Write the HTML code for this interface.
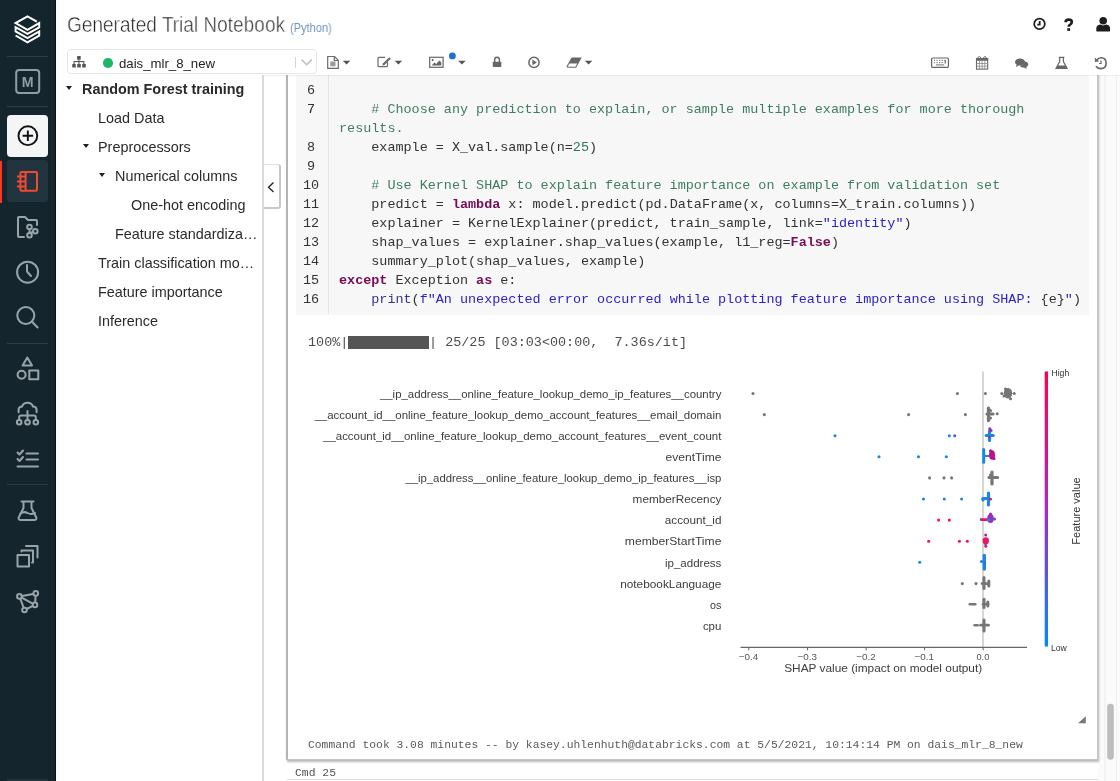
<!DOCTYPE html>
<html><head><meta charset="utf-8">
<style>
*{margin:0;padding:0;box-sizing:border-box}
html,body{width:1120px;height:781px;overflow:hidden;background:#fff;font-family:"Liberation Sans",sans-serif;position:relative}
.abs{position:absolute}
body>div,body>svg{will-change:transform}
#nav{left:0;top:0;width:56px;height:781px;background:#15252d;border-right:1px solid #0a1418}
.sep{position:absolute;left:7px;width:41px;height:1px;background:#2e3e46}
svg{position:absolute;overflow:visible}
#title{left:67px;top:12px;font-size:22.5px;line-height:26px;color:#1e1e1e;-webkit-text-stroke:0.55px #fff;white-space:nowrap;transform-origin:left top;transform:scaleX(0.846)}
#py{left:290px;top:21px;font-size:12px;color:#7094c2;white-space:nowrap;transform-origin:left top;transform:scaleX(0.92)}
#cluster{left:67px;top:49px;width:250px;height:25px;border:1px solid #e6e6e6;border-radius:4px;background:#fff}
.toc{position:absolute;margin-top:1px;white-space:nowrap;font-size:14.4px;color:#2a2a2a;line-height:17px}
.tri{position:absolute;width:0;height:0;margin-top:-1px;margin-left:-0.2px;border-left:3.1px solid transparent;border-right:3.1px solid transparent;border-top:4.6px solid #1e1e1e}
.code{position:absolute;margin-top:1px;left:339px;font-family:"Liberation Mono",monospace;font-size:13.45px;white-space:pre;line-height:19px;color:#333}
.ln{position:absolute;margin-top:1px;font-family:"Liberation Mono",monospace;font-size:13.45px;line-height:19px;color:#333;text-align:center;width:40px;left:291px}
.k{color:#760c56;font-weight:bold}.b{color:#36338f}
.c{color:#3f7d60}
.s{color:#2c22c8}
.n{color:#2f7656}
.lbl{position:absolute;right:400px;font-size:11.4px;color:#333;white-space:nowrap;line-height:13px}
</style></head><body>
<!-- notebook area -->
<div class="abs" style="left:263px;top:75px;width:1px;height:706px;background:#dcdcdc"></div>
<!-- cell -->
<div class="abs" style="left:286px;top:40px;width:812px;height:720px;border:1px solid #c4c4c4;border-left:2px solid #b4b4b4;box-shadow:1px 1.5px 2px rgba(0,0,0,.28);background:#fff"></div>
<div class="abs" style="left:296px;top:40px;width:793px;height:275px;background:#f7f7f7"></div>
<div class="abs" style="left:328px;top:40px;width:1px;height:274px;background:#e4e4e4"></div>

<div class="ln" style="top:80px">6</div>
<div class="ln" style="top:99px">7</div>
<div class="ln" style="top:137px">8</div>
<div class="ln" style="top:156px">9</div>
<div class="ln" style="top:175px">10</div>
<div class="ln" style="top:194px">11</div>
<div class="ln" style="top:213px">12</div>
<div class="ln" style="top:232px">13</div>
<div class="ln" style="top:251px">14</div>
<div class="ln" style="top:270px">15</div>
<div class="ln" style="top:289px">16</div>
<div class="code" style="top:99px"><span class="c">    # Choose any prediction to explain, or sample multiple examples for more thorough</span></div>
<div class="code" style="top:118px"><span class="c">results.</span></div>
<div class="code" style="top:137px">    example = X_val.sample(n=<span class="n">25</span>)</div>
<div class="code" style="top:175px"><span class="c">    # Use Kernel SHAP to explain feature importance on example from validation set</span></div>
<div class="code" style="top:194px">    predict = <span class="k">lambda</span> x: model.predict(pd.DataFrame(x, columns=X_train.columns))</div>
<div class="code" style="top:213px">    explainer = KernelExplainer(predict, train_sample, link=<span class="s">"identity"</span>)</div>
<div class="code" style="top:232px">    shap_values = explainer.shap_values(example, l1_reg=<span class="k">False</span>)</div>
<div class="code" style="top:251px">    summary_plot(shap_values, example)</div>
<div class="code" style="top:270px"><span class="k">except</span> Exception <span class="k">as</span> e:</div>
<div class="code" style="top:289px">    <span class="b">print</span>(<span class="s">f"An unexpected error occurred while plotting feature importance using SHAP: </span>{e}<span class="s">"</span>)</div>

<!-- output -->
<div class="code" style="left:308px;top:332px;color:#4d4d4d">100%|<span style="display:inline-block;width:80.7px;height:12.7px;background:#555;vertical-align:-3px"></span>| 25/25 [03:03&lt;00:00,  7.36s/it]</div>
<div class="code" style="left:308px;top:735px;font-size:11.35px;color:#5a5a5a">Command took 3.08 minutes -- by kasey.uhlenhuth@databricks.com at 5/5/2021, 10:14:14 PM on dais_mlr_8_new</div>
<div class="code" style="left:295px;top:763px;font-size:11.4px;color:#555">Cmd 25</div>
<div class="abs" style="left:287px;top:779px;width:811px;height:2px;border-top:1px solid #ddd"></div>

<!-- PLOT -->
<svg class="abs" style="left:0;top:0" width="1120" height="781">
<line x1="983" y1="371.5" x2="983" y2="647" stroke="#b4b4b4" stroke-width="1.1"/>
<text x="721.4" y="397.7" text-anchor="end" font-size="11.6" fill="#3c3c3c" font-family="Liberation Sans" textLength="341.5" lengthAdjust="spacingAndGlyphs">__ip_address__online_feature_lookup_demo_ip_features__country</text>
<text x="721.4" y="418.8" text-anchor="end" font-size="11.6" fill="#3c3c3c" font-family="Liberation Sans" textLength="407.0" lengthAdjust="spacingAndGlyphs">__account_id__online_feature_lookup_demo_account_features__email_domain</text>
<text x="721.4" y="439.9" text-anchor="end" font-size="11.6" fill="#3c3c3c" font-family="Liberation Sans" textLength="398.4" lengthAdjust="spacingAndGlyphs">__account_id__online_feature_lookup_demo_account_features__event_count</text>
<text x="721.4" y="461.0" text-anchor="end" font-size="11.6" fill="#3c3c3c" font-family="Liberation Sans" textLength="55.8" lengthAdjust="spacingAndGlyphs">eventTime</text>
<text x="721.4" y="482.1" text-anchor="end" font-size="11.6" fill="#3c3c3c" font-family="Liberation Sans" textLength="316.0" lengthAdjust="spacingAndGlyphs">__ip_address__online_feature_lookup_demo_ip_features__isp</text>
<text x="721.4" y="503.2" text-anchor="end" font-size="11.6" fill="#3c3c3c" font-family="Liberation Sans" textLength="88.8" lengthAdjust="spacingAndGlyphs">memberRecency</text>
<text x="721.4" y="524.3" text-anchor="end" font-size="11.6" fill="#3c3c3c" font-family="Liberation Sans" textLength="56.6" lengthAdjust="spacingAndGlyphs">account_id</text>
<text x="721.4" y="545.4" text-anchor="end" font-size="11.6" fill="#3c3c3c" font-family="Liberation Sans" textLength="96.6" lengthAdjust="spacingAndGlyphs">memberStartTime</text>
<text x="721.4" y="566.5" text-anchor="end" font-size="11.6" fill="#3c3c3c" font-family="Liberation Sans" textLength="56.5" lengthAdjust="spacingAndGlyphs">ip_address</text>
<text x="721.4" y="587.6" text-anchor="end" font-size="11.6" fill="#3c3c3c" font-family="Liberation Sans" textLength="101.2" lengthAdjust="spacingAndGlyphs">notebookLanguage</text>
<text x="721.4" y="608.7" text-anchor="end" font-size="11.6" fill="#3c3c3c" font-family="Liberation Sans" textLength="11.4" lengthAdjust="spacingAndGlyphs">os</text>
<text x="721.4" y="629.8" text-anchor="end" font-size="11.6" fill="#3c3c3c" font-family="Liberation Sans" textLength="18.5" lengthAdjust="spacingAndGlyphs">cpu</text>
<circle cx="753.0" cy="393.5" r="1.55" fill="#767676"/>
<circle cx="957.4" cy="393.5" r="1.55" fill="#767676"/>
<circle cx="985.4" cy="393.5" r="1.55" fill="#767676"/>
<ellipse cx="1008.0" cy="393.2" rx="4.2" ry="5.2" fill="#767676"/>
<circle cx="1001.8" cy="393.5" r="1.55" fill="#767676"/>
<circle cx="1014.2" cy="393.5" r="1.55" fill="#767676"/>
<circle cx="1010.5" cy="398.8" r="1.55" fill="#767676"/>
<circle cx="1005.5" cy="389.0" r="1.55" fill="#767676"/>
<circle cx="1004.0" cy="396.0" r="1.55" fill="#767676"/>
<circle cx="764.3" cy="414.6" r="1.55" fill="#767676"/>
<circle cx="908.6" cy="414.6" r="1.55" fill="#767676"/>
<circle cx="965.4" cy="414.6" r="1.55" fill="#767676"/>
<line x1="988.5" y1="408.2" x2="988.5" y2="420.5" stroke="#767676" stroke-width="3.3" stroke-linecap="round"/>
<line x1="987.0" y1="414.0" x2="993.0" y2="414.0" stroke="#767676" stroke-width="3.2" stroke-linecap="round"/>
<circle cx="990.5" cy="410.5" r="1.55" fill="#767676"/>
<circle cx="990.5" cy="418.0" r="1.55" fill="#767676"/>
<circle cx="997.2" cy="413.8" r="1.55" fill="#767676"/>
<circle cx="835.0" cy="435.7" r="1.55" fill="#1a86e8"/>
<circle cx="949.3" cy="435.7" r="1.55" fill="#1a86e8"/>
<circle cx="954.7" cy="435.7" r="1.55" fill="#5b55d6"/>
<line x1="989.5" y1="431.0" x2="989.5" y2="440.5" stroke="#1a86e8" stroke-width="3.2" stroke-linecap="round"/>
<line x1="986.2" y1="435.5" x2="993.2" y2="435.5" stroke="#1a86e8" stroke-width="3.2" stroke-linecap="round"/>
<circle cx="989.8" cy="428.7" r="1.55" fill="#9a2cb8"/>
<circle cx="991.0" cy="430.5" r="1.55" fill="#9a2cb8"/>
<circle cx="989.5" cy="437.0" r="1.0" fill="#c2108a"/>
<circle cx="879.0" cy="456.8" r="1.55" fill="#1a86e8"/>
<circle cx="918.5" cy="456.8" r="1.55" fill="#1a86e8"/>
<circle cx="946.3" cy="456.8" r="1.55" fill="#1a86e8"/>
<line x1="983.7" y1="449.5" x2="983.7" y2="462.2" stroke="#1a86e8" stroke-width="3.0" stroke-linecap="round"/>
<line x1="984.0" y1="456.0" x2="989.0" y2="456.0" stroke="#1a86e8" stroke-width="2.2" stroke-linecap="round"/>
<ellipse cx="992.0" cy="455.0" rx="3.0" ry="4.8" fill="#c2108a"/>
<circle cx="990.5" cy="450.8" r="1.55" fill="#c2108a"/>
<circle cx="994.0" cy="458.5" r="1.55" fill="#c2108a"/>
<circle cx="929.6" cy="477.9" r="1.55" fill="#767676"/>
<circle cx="944.0" cy="477.9" r="1.55" fill="#767676"/>
<circle cx="951.6" cy="477.9" r="1.55" fill="#767676"/>
<line x1="992.0" y1="472.0" x2="992.0" y2="484.0" stroke="#767676" stroke-width="3.2" stroke-linecap="round"/>
<line x1="989.0" y1="477.5" x2="997.5" y2="477.5" stroke="#767676" stroke-width="3.2" stroke-linecap="round"/>
<circle cx="990.5" cy="475.0" r="1.55" fill="#767676"/>
<circle cx="923.5" cy="499.0" r="1.55" fill="#1a86e8"/>
<circle cx="944.3" cy="499.0" r="1.55" fill="#1a86e8"/>
<circle cx="961.6" cy="499.0" r="1.55" fill="#1a86e8"/>
<line x1="988.5" y1="493.0" x2="988.5" y2="505.0" stroke="#1a86e8" stroke-width="3.2" stroke-linecap="round"/>
<line x1="982.8" y1="498.5" x2="988.5" y2="498.5" stroke="#1a86e8" stroke-width="3.2" stroke-linecap="round"/>
<circle cx="983.0" cy="500.0" r="1.55" fill="#1a86e8"/>
<circle cx="990.6" cy="499.2" r="1.4" fill="#ee1558"/>
<circle cx="938.6" cy="520.1" r="1.55" fill="#ee1558"/>
<circle cx="949.3" cy="520.1" r="1.55" fill="#ee1558"/>
<line x1="981.5" y1="519.6" x2="987.0" y2="519.6" stroke="#ee1558" stroke-width="2.8" stroke-linecap="round"/>
<circle cx="981.2" cy="519.6" r="1.3" fill="#9a2cb8"/>
<ellipse cx="990.5" cy="518.5" rx="3.3" ry="4.5" fill="#9a2cb8"/>
<circle cx="994.5" cy="519.0" r="1.55" fill="#5b55d6"/>
<circle cx="989.0" cy="520.0" r="1.6" fill="#1a86e8"/>
<circle cx="990.5" cy="514.0" r="1.55" fill="#9a2cb8"/>
<circle cx="928.7" cy="541.2" r="1.55" fill="#ee1558"/>
<circle cx="959.4" cy="541.2" r="1.55" fill="#ee1558"/>
<circle cx="967.3" cy="541.2" r="1.55" fill="#ee1558"/>
<ellipse cx="985.8" cy="540.8" rx="3.2" ry="3.6" fill="#ee1558"/>
<circle cx="985.7" cy="535.0" r="1.55" fill="#9a2cb8"/>
<circle cx="985.8" cy="546.2" r="1.55" fill="#ee1558"/>
<circle cx="985.5" cy="544.5" r="1.2" fill="#5b55d6"/>
<circle cx="919.7" cy="562.3" r="1.55" fill="#1a86e8"/>
<line x1="984.3" y1="555.5" x2="984.3" y2="569.0" stroke="#1a86e8" stroke-width="3.4" stroke-linecap="round"/>
<circle cx="981.5" cy="561.5" r="1.55" fill="#1a86e8"/>
<circle cx="984.5" cy="563.0" r="1.0" fill="#5b55d6"/>
<circle cx="962.3" cy="583.6" r="1.55" fill="#767676"/>
<circle cx="976.0" cy="583.6" r="1.55" fill="#767676"/>
<line x1="984.0" y1="577.5" x2="984.0" y2="588.5" stroke="#767676" stroke-width="3.0" stroke-linecap="round"/>
<line x1="988.8" y1="581.0" x2="988.8" y2="586.0" stroke="#767676" stroke-width="3.0" stroke-linecap="round"/>
<line x1="982.0" y1="583.6" x2="988.0" y2="583.6" stroke="#767676" stroke-width="2.6" stroke-linecap="round"/>
<line x1="969.8" y1="604.3" x2="975.2" y2="604.3" stroke="#767676" stroke-width="2.6" stroke-linecap="round"/>
<line x1="984.0" y1="599.2" x2="984.0" y2="607.6" stroke="#767676" stroke-width="3.0" stroke-linecap="round"/>
<line x1="987.8" y1="602.0" x2="987.8" y2="606.0" stroke="#767676" stroke-width="3.0" stroke-linecap="round"/>
<line x1="983.0" y1="604.3" x2="988.0" y2="604.3" stroke="#767676" stroke-width="2.6" stroke-linecap="round"/>
<line x1="974.6" y1="625.2" x2="977.6" y2="625.2" stroke="#767676" stroke-width="2.6" stroke-linecap="round"/>
<line x1="980.5" y1="625.2" x2="988.5" y2="625.2" stroke="#767676" stroke-width="2.8" stroke-linecap="round"/>
<line x1="984.0" y1="620.0" x2="984.0" y2="631.0" stroke="#767676" stroke-width="3.0" stroke-linecap="round"/>
<line x1="740.5" y1="647.3" x2="1027" y2="647.3" stroke="#666" stroke-width="1.3"/>
<line x1="748.8" y1="647.5" x2="748.8" y2="650.3" stroke="#666" stroke-width="1"/>
<text x="748.5" y="659.8" text-anchor="middle" font-size="9.3" fill="#555" font-family="Liberation Sans" textLength="19.5" lengthAdjust="spacingAndGlyphs">−0.4</text>
<line x1="807.5" y1="647.5" x2="807.5" y2="650.3" stroke="#666" stroke-width="1"/>
<text x="807.2" y="659.8" text-anchor="middle" font-size="9.3" fill="#555" font-family="Liberation Sans" textLength="19.5" lengthAdjust="spacingAndGlyphs">−0.3</text>
<line x1="866.2" y1="647.5" x2="866.2" y2="650.3" stroke="#666" stroke-width="1"/>
<text x="865.9000000000001" y="659.8" text-anchor="middle" font-size="9.3" fill="#555" font-family="Liberation Sans" textLength="19.5" lengthAdjust="spacingAndGlyphs">−0.2</text>
<line x1="924.6" y1="647.5" x2="924.6" y2="650.3" stroke="#666" stroke-width="1"/>
<text x="924.3000000000001" y="659.8" text-anchor="middle" font-size="9.3" fill="#555" font-family="Liberation Sans" textLength="19.5" lengthAdjust="spacingAndGlyphs">−0.1</text>
<line x1="983.2" y1="647.5" x2="983.2" y2="650.3" stroke="#666" stroke-width="1"/>
<text x="982.9000000000001" y="659.8" text-anchor="middle" font-size="9.3" fill="#555" font-family="Liberation Sans" textLength="13" lengthAdjust="spacingAndGlyphs">0.0</text>
<text x="883.2" y="672.4" text-anchor="middle" font-size="11.6" fill="#3c3c3c" font-family="Liberation Sans" textLength="198" lengthAdjust="spacingAndGlyphs">SHAP value (impact on model output)</text>
<defs><linearGradient id="cb" x1="0" y1="0" x2="0" y2="1"><stop offset="0" stop-color="#ff0052"/><stop offset="0.5" stop-color="#a42bc0"/><stop offset="1" stop-color="#008bfb"/></linearGradient></defs>
<rect x="1044.7" y="371.5" width="3.3" height="275" fill="url(#cb)"/>
<text x="1051.5" y="375.5" font-size="8.6" fill="#333" font-family="Liberation Sans">High</text>
<text x="1051" y="651" font-size="8.6" fill="#333" font-family="Liberation Sans">Low</text>
<text x="0" y="0" transform="translate(1079.6,511) rotate(-90)" text-anchor="middle" font-size="11" fill="#333" font-family="Liberation Sans">Feature value</text>
</svg>
<!-- /PLOT -->
<!-- toolbar white -->
<div class="abs" style="left:56px;top:0;width:1064px;height:75px;background:#fff"></div>
<div id="title" class="abs">Generated Trial Notebook</div>
<div id="py" class="abs">(Python)</div>
<div id="cluster" class="abs"></div>
<div class="abs" style="left:119px;top:55.5px;font-size:13.2px;color:#222;white-space:nowrap">dais_mlr_8_new</div>
<div class="abs" style="left:102.7px;top:58.4px;width:9.6px;height:9.6px;border-radius:50%;background:#1db766"></div>

<!-- TOOL -->
<svg class="abs" style="left:0;top:0" width="1120" height="76">
<!-- header icons -->
<g fill="none" stroke="#1e1e1e" stroke-width="1.75">
<circle cx="1039.5" cy="23.9" r="5.3"/>
<path d="M1039.7 21 V24.6 H1037.3"/>
</g>
<path d="M1065.6 22.2 Q1065.5 19.7 1068.7 19.7 Q1071.8 19.7 1071.8 22.1 Q1071.8 23.7 1070.1 24.6 Q1068.7 25.3 1068.7 26.8" fill="none" stroke="#1e1e1e" stroke-width="2.7"/>
<rect x="1067.3" y="28.2" width="2.8" height="2.7" fill="#1e1e1e"/>
<circle cx="1103.2" cy="20.8" r="3.8" fill="#1e1e1e"/>
<path d="M1096.3 30.4 V28.8 Q1096.3 25 1100.2 24.6 Q1103.2 26.2 1106.2 24.6 Q1110.1 25 1110.1 28.8 V30.4 Q1110.1 31.6 1108.9 31.6 H1097.5 Q1096.3 31.6 1096.3 30.4 Z" fill="#1e1e1e"/>
<!-- cluster network icon -->
<g fill="#555">
<rect x="77.1" y="56.1" width="3.6" height="3.6" rx="0.5"/>
<rect x="78.4" y="59.5" width="1" height="2.5"/>
<rect x="74.2" y="61" width="9.8" height="1.1"/>
<rect x="73.5" y="61" width="1.1" height="3"/><rect x="78.4" y="61" width="1.1" height="3"/><rect x="83.3" y="61" width="1.1" height="3"/>
<rect x="72.2" y="64" width="3.6" height="3.4" rx="0.5"/><rect x="77.2" y="64" width="3.6" height="3.4" rx="0.5"/><rect x="82.2" y="64" width="3.6" height="3.4" rx="0.5"/>
</g>
<rect x="295" y="57" width="1" height="11" fill="#d5d5d5"/>
<path d="M301.5 59.5 L306.7 64.8 L311.9 59.5" fill="none" stroke="#bdbdbd" stroke-width="1.5"/>
<!-- file -->
<g fill="none" stroke="#6a6a6a" stroke-width="1.2">
<path d="M327.7 56.5 H334.5 L338.3 60.3 V68.3 H327.7 Z"/>
<path d="M334.3 56.5 V60.5 H338.3"/>
</g>
<rect x="330.3" y="61.5" width="5.2" height="4.8" fill="#9a9a9a"/>
<!-- carets -->
<g fill="#555">
<path d="M342.8 60.7 H350.3 L346.55 64.5 Z"/>
<path d="M394.7 60.7 H402.2 L398.45 64.5 Z"/>
<path d="M458.2 60.7 H465.7 L461.95 64.5 Z"/>
<path d="M584.8 60.7 H592.3 L588.55 64.5 Z"/>
</g>
<!-- edit -->
<path d="M385 57.3 H379 Q378 57.3 378 58.3 V65.7 Q378 66.6 379 66.6 H386.6 Q387.5 66.6 387.5 65.7 V62" fill="none" stroke="#6a6a6a" stroke-width="1.2"/>
<path d="M389.3 57.2 L390.8 58.7 L384.5 65 L382.3 65.5 L382.8 63.4 Z" fill="#6a6a6a"/>
<!-- image -->
<rect x="429.7" y="57.3" width="13.4" height="10" fill="none" stroke="#666" stroke-width="1.2"/>
<circle cx="432.6" cy="59.9" r="1" fill="#555"/>
<path d="M431.5 65.6 L434.5 62.5 L436.2 64 L439.3 60.5 L441.3 62.3 V65.6 Z" fill="#666"/>
<circle cx="452.4" cy="55.9" r="3.4" fill="#1b72c8"/>
<!-- lock -->
<path d="M494.7 62 V59.7 Q494.7 57.2 497.05 57.2 Q499.4 57.2 499.4 59.7 V62" fill="none" stroke="#666" stroke-width="1.4"/>
<rect x="492.8" y="61.7" width="8.5" height="5.3" rx="0.6" fill="#666"/>
<!-- play -->
<circle cx="534" cy="62.4" r="5.1" fill="none" stroke="#666" stroke-width="1.5"/>
<path d="M532.4 59.6 L536.9 62.4 L532.4 65.2 Z" fill="#666"/>
<!-- eraser -->
<path d="M572 58 H580.8 L575.8 67.2 H567.8 Q566.6 67.2 567.3 66 Z" fill="none" stroke="#666" stroke-width="1.1"/>
<path d="M572 58 H580.8 L577.7 63.5 H569 Z" fill="#666"/>
<!-- keyboard -->
<rect x="931.6" y="58" width="16.8" height="9.4" rx="1" fill="none" stroke="#666" stroke-width="1.2"/>
<g fill="#888">
<rect x="933.8" y="59.8" width="1.3" height="1.2"/><rect x="936.4" y="59.8" width="1.3" height="1.2"/><rect x="939" y="59.8" width="1.3" height="1.2"/><rect x="941.6" y="59.8" width="1.3" height="1.2"/><rect x="944.2" y="59.8" width="1.3" height="1.2"/>
<rect x="933.8" y="62" width="1.3" height="1.2"/><rect x="936.4" y="62" width="1.3" height="1.2"/><rect x="939" y="62" width="1.3" height="1.2"/><rect x="941.6" y="62" width="1.3" height="1.2"/><rect x="944.5" y="60" width="1.5" height="3.5"/>
<rect x="936" y="64.3" width="8.2" height="1.2"/>
</g>
<!-- calendar -->
<rect x="976.5" y="58.5" width="11.2" height="10.6" fill="none" stroke="#666" stroke-width="1.1"/>
<rect x="976.2" y="58.2" width="11.8" height="2.6" fill="#666"/>
<circle cx="979.3" cy="57.9" r="1.3" fill="none" stroke="#666" stroke-width="0.9"/>
<circle cx="984.9" cy="57.9" r="1.3" fill="none" stroke="#666" stroke-width="0.9"/>
<g stroke="#888" stroke-width="0.8"><path d="M979.4 61 V69 M982.1 61 V69 M984.8 61 V69 M976.5 63.5 H987.7 M976.5 66.2 H987.7"/></g>
<!-- chat -->
<ellipse cx="1020" cy="62" rx="5" ry="3.6" fill="#666"/>
<path d="M1016.5 64.5 L1016 67 L1019 65.2 Z" fill="#666"/>
<path d="M1023.3 61.2 Q1028.3 61.6 1028.3 64.4 Q1028.3 66.2 1026.2 67 L1027 68.8 L1023.6 67.5 Q1020.6 67.3 1019.7 65.8 Q1023.3 65.5 1024.6 62.8 Z" fill="#666"/>
<!-- flask -->
<path d="M1058.8 57.3 H1064.3 M1059.7 57.3 V61.5 L1056 68.5 H1067.1 L1063.4 61.5 V57.3" fill="none" stroke="#666" stroke-width="1.2"/>
<path d="M1057.6 65.5 H1065.5 L1067.1 68.6 H1056 Z" fill="#666"/>
<!-- history -->
<path d="M1096.5 60.5 Q1098.5 57.8 1101.2 57.8 Q1106.1 57.8 1106.1 63.2 Q1106.1 68.6 1100.7 68.6 Q1097.6 68.6 1096 66.2" fill="none" stroke="#666" stroke-width="1.6"/>
<path d="M1094.7 57.6 L1095 62 L1099.2 61.5 Z" fill="#666"/>
<path d="M1101 60.5 V63.5 H1099" fill="none" stroke="#666" stroke-width="1.2"/>
</svg>

<!-- /TOOL -->
<!-- toc -->
<div class="abs" style="left:57px;top:75px;width:206px;height:706px;background:#fff"></div>
<div class="tri" style="left:66px;top:87px"></div>
<div class="toc" style="left:82px;top:80px;font-weight:bold">Random Forest training</div>
<div class="toc" style="left:98px;top:109px">Load Data</div>
<div class="tri" style="left:83px;top:145px"></div>
<div class="toc" style="left:98px;top:138px">Preprocessors</div>
<div class="tri" style="left:99px;top:174px"></div>
<div class="toc" style="left:115px;top:167px">Numerical columns</div>
<div class="toc" style="left:131px;top:196px">One-hot encoding</div>
<div class="toc" style="left:115px;top:225px">Feature standardiza…</div>
<div class="toc" style="left:98px;top:254px">Train classification mo…</div>
<div class="toc" style="left:98px;top:283px">Feature importance</div>
<div class="toc" style="left:98px;top:312px">Inference</div>
<div class="abs" style="left:263px;top:164px;width:18px;height:45px;background:#fff;border:1px solid #e0e0e0;border-left:none;border-right:2px solid #c8c8c8;border-bottom:2px solid #c8c8c8;border-radius:0 3px 3px 0"></div>
<div class="abs" style="left:262px;top:75px;width:2px;height:706px;background:#dadada"></div>

<div id="nav" class="abs"></div>
<div class="sep" style="top:56px"></div>
<div class="abs" style="left:7px;top:779px;width:41px;height:2px;background:#22343c"></div>
<div class="abs" style="left:51px;top:0;width:4px;height:781px;background:#182830"></div>
<div class="sep" style="top:106px"></div>
<div class="sep" style="top:343px"></div>
<div class="sep" style="top:484px"></div>
<div class="abs" style="left:7px;top:115px;width:41px;height:42px;background:#f4f5f6;border-radius:4px"></div>
<div class="abs" style="left:7px;top:160px;width:41px;height:42px;background:#22343d;border-radius:3px"></div>
<div class="abs" style="left:0;top:160.5px;width:2px;height:42px;background:#ff3621"></div>
<!-- EXTRA -->
<svg class="abs" style="left:0;top:0" width="1120" height="781">
<path d="M268.5 182.5 L273.5 187.3 L268.5 192" fill="none" stroke="#222" stroke-width="1.3" transform="translate(542 0) scale(-1 1)"/>
<path d="M1085.8 716.3 V723.3 H1078 Z" fill="#777"/>
<rect x="1104.5" y="75" width="1" height="706" fill="#efefef"/>
<rect x="1116" y="75" width="1" height="706" fill="#f3f3f3"/>
<rect x="1107.2" y="703.8" width="6.6" height="56" rx="3.3" fill="#c1c1c1"/>
</svg>
<!-- /EXTRA -->
<div class="abs" style="left:264px;top:75px;width:856px;height:1px;background:rgba(0,0,0,0.06)"></div>
<div class="abs" style="left:1098px;top:76px;width:22px;height:705px;background:rgba(0,0,0,0.015)"></div>
<!-- NAV -->
<svg class="abs" style="left:0;top:0" width="56" height="781">
<g fill="none" stroke="#ffffff" stroke-width="2" stroke-linejoin="miter">
<path d="M36.8 21.7 L27.5 16.3 L15.6 23.1 L27.5 29.8 L39.2 23.1 L39.2 27.3 L27.5 33.9 L15.6 27.2 L15.6 31.4 L27.5 38.1 L39.2 31.4 L39.2 35.6 L27.5 42.3 L15.6 35.5"/>
</g>
<rect x="16.2" y="70" width="23" height="23" rx="3" fill="none" stroke="#8d9ea6" stroke-width="2"/>
<text x="27.6" y="86.7" text-anchor="middle" font-family="Liberation Sans" font-weight="bold" font-size="15.2" fill="#8d9ea6" textLength="11.8" lengthAdjust="spacingAndGlyphs">M</text>
<g fill="none" stroke="#111" stroke-width="1.9">
<circle cx="27.85" cy="135.7" r="9.4"/>
<path d="M22.6 135.7 H33.1 M27.85 130.4 V141"/>
</g>
<g fill="none" stroke="#ef4a33" stroke-width="2">
<rect x="20.4" y="171.9" width="16.6" height="18.8" rx="1.2"/>
<path d="M25.6 171.9 V190.7"/>
<path d="M17 176.4 H25 M17 181.4 H25 M17 186.6 H25"/>
</g>
<g fill="none" stroke="#97a5ab" stroke-width="2" stroke-linecap="round" stroke-linejoin="round">
<!-- repos -->
<path d="M24 237 H19 Q18 237 18 236 V218 Q18 217 19 217 H25 L28 220 H36 Q37 220 37 221 V225"/>
<circle cx="29.5" cy="227" r="2.3"/>
<circle cx="29.5" cy="235.3" r="2.3"/>
<circle cx="35.3" cy="231.2" r="2.3"/>
<path d="M29.5 229.3 V233 M31.5 232.5 L33.3 231.6"/>
<!-- clock -->
<circle cx="27.6" cy="272.2" r="10.5"/>
<path d="M27 265 V271.5 L31 276"/>
<!-- search -->
<circle cx="25.8" cy="315.5" r="8.5"/>
<path d="M32 321.7 L37.6 327.5"/>
<!-- shapes -->
<path d="M27.3 357.5 L32 365.5 H22.6 Z"/>
<circle cx="21.6" cy="374.7" r="4"/>
<rect x="29.3" y="370.4" width="9" height="8.8"/>
<!-- cloud network -->
<path d="M18.6 412.2 V409.8 Q18.6 406.8 22 406.6 Q23.2 402.8 27.5 402.8 Q31.8 402.8 33 406.6 Q36.6 406.8 36.6 409.8 V412.2"/>
<path d="M27.5 411 V419.8 M19.2 419.8 V417.2 Q19.2 415.4 21 415.4 H34 Q35.8 415.4 35.8 417.2 V419.8"/>
<circle cx="19.2" cy="422.3" r="2.3"/>
<circle cx="27.5" cy="422.3" r="2.3"/>
<circle cx="35.8" cy="422.3" r="2.3"/>
<!-- list -->
<path d="M17.5 452.5 L19.5 454.5 L23 450.5 M17.5 459 L19.5 461 L23 457 M26.5 453.5 H38 M26.5 459.5 H38 M17.5 466.5 H38"/>
<!-- flask -->
<path d="M21.5 501.5 H33.5 M23.5 501.5 V508 L18.7 517.5 Q18 520 21 520 H34 Q37 520 36.3 517.5 L31.5 508 V501.5"/>
<path d="M20.5 513.5 Q24 511 27.5 513 Q31 515 35 513"/>
<!-- copies -->
<rect x="17.5" y="555" width="11.5" height="11.5"/>
<path d="M21.5 551.5 V550.5 H33 V562.5 H32"/>
<path d="M26 546 H37.5 V557.5"/>
<!-- network -->
<path d="M19.4 596.4 L35.8 593.4 L35 604.9 L24.5 610 Z M19.4 596.4 L35 604.9"/>
<circle cx="19.4" cy="596.4" r="2.3" fill="#15252d"/>
<circle cx="35.8" cy="593.4" r="2.3" fill="#15252d"/>
<circle cx="35" cy="604.9" r="2.3" fill="#15252d"/>
<circle cx="24.5" cy="610" r="2.3" fill="#15252d"/>
</g>
</svg>

<!-- /NAV -->
</body></html>
